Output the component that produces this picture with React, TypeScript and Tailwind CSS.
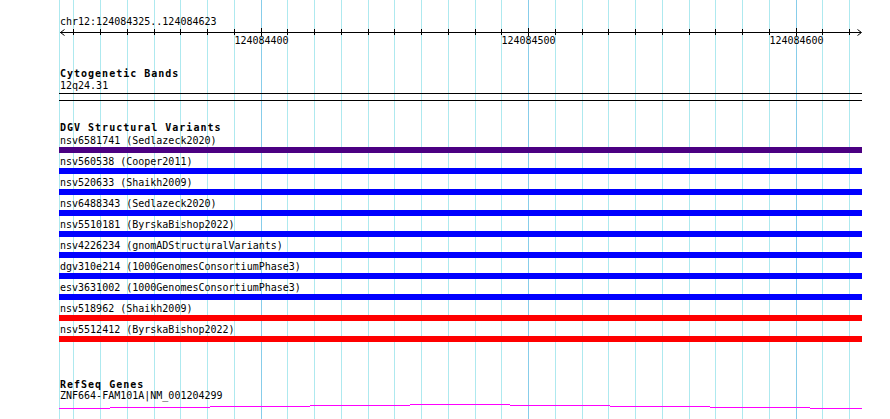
import React from "react";

const MINOR = "#aee9ef";
const MAJOR = "#87cdea";
const gridXs = Array.from({ length: 30 }, (_, k) => Math.round(73.4 + 26.75 * k));
const majorIdx = new Set([7, 17, 27]);
const tickLabels = [
  { k: 7, text: "124084400" },
  { k: 17, text: "124084500" },
  { k: 27, text: "124084600" },
];

const rows: { label: string; bar: string }[] = [
  { label: "nsv6581741 (Sedlazeck2020)", bar: "bg-[#4b0082]" },
  { label: "nsv560538 (Cooper2011)", bar: "bg-[#0000ff]" },
  { label: "nsv520633 (Shaikh2009)", bar: "bg-[#0000ff]" },
  { label: "nsv6488343 (Sedlazeck2020)", bar: "bg-[#0000ff]" },
  { label: "nsv5510181 (ByrskaBishop2022)", bar: "bg-[#0000ff]" },
  { label: "nsv4226234 (gnomADStructuralVariants)", bar: "bg-[#0000ff]" },
  { label: "dgv310e214 (1000GenomesConsortiumPhase3)", bar: "bg-[#0000ff]" },
  { label: "esv3631002 (1000GenomesConsortiumPhase3)", bar: "bg-[#0000ff]" },
  { label: "nsv518962 (Shaikh2009)", bar: "bg-[#ff0000]" },
  { label: "nsv5512412 (ByrskaBishop2022)", bar: "bg-[#ff0000]" },
];

const wiggle: [number, number, number][] = [
  [59, 110, 408],
  [110, 210, 407],
  [210, 310, 406],
  [310, 410, 405],
  [410, 510, 404],
  [510, 610, 405],
  [610, 710, 406],
  [710, 810, 407],
  [810, 862, 408],
];

function GridLayer() {
  return (
    <svg
      className="absolute inset-0 pointer-events-none"
      width={890}
      height={419}
      shapeRendering="crispEdges"
    >
      <rect x={59} y={0} width={1} height={419} fill={MINOR} />
      {gridXs.map((x, k) => (
        <rect key={k} x={x} y={0} width={1} height={419} fill={majorIdx.has(k) ? MAJOR : MINOR} />
      ))}
    </svg>
  );
}

function Ruler() {
  return (
    <svg width={890} height={20} className="block">
      <rect x={60} y={4} width={801} height={1} fill="#000" shapeRendering="crispEdges" />
      {gridXs.map((x, k) => (
        <rect
          key={k}
          x={x}
          y={majorIdx.has(k) ? 0 : 1}
          width={1}
          height={majorIdx.has(k) ? 8 : 6}
          fill="#000"
          shapeRendering="crispEdges"
        />
      ))}
      <polyline points="64.5,1.5 60.5,4.5 64.5,7.5" fill="none" stroke="#000" strokeWidth={1} />
      <polyline points="857.5,1.5 861.5,4.5 857.5,7.5" fill="none" stroke="#000" strokeWidth={1} />
      {tickLabels.map((t) => (
        <text
          key={t.k}
          x={gridXs[t.k] + 0.5}
          y={16}
          textAnchor="middle"
          fontFamily="'DejaVu Sans Mono', monospace"
          fontSize={10}
          fill="#000"
        >
          {t.text}
        </text>
      ))}
    </svg>
  );
}

function Wiggle() {
  return (
    <svg width={890} height={10} className="block" shapeRendering="crispEdges">
      {wiggle.map(([x1, x2, y], i) => (
        <rect key={i} x={x1} y={y - 402} width={x2 - x1} height={1} fill="#ff00ff" />
      ))}
    </svg>
  );
}

const txt = "pl-[60px] h-[13px] text-[10px] leading-[13px] whitespace-nowrap text-black";
const bold = "pl-[60px] text-[10px] leading-[13px] font-bold tracking-[1px] whitespace-nowrap text-black";

export default function App() {
  return (
    <div className="relative w-[890px] h-[419px] overflow-hidden bg-white font-['DejaVu_Sans_Mono',monospace]">
      <GridLayer />
      <div className="relative flex flex-col">
        <div className="h-[15px]" />
        <div className={txt}>chr12:124084325..124084623</div>
        <Ruler />
        <div className="h-[19px]" />

        <div className={`${bold} h-[12px]`}>Cytogenetic Bands</div>
        <div className={txt}>12q24.31</div>
        <div className="h-[1px]" />
        <div className="ml-[59px] w-[803px] h-[8px] border-y border-black" />

        <div className="h-[20px]" />
        <div className={`${bold} h-[13px]`}>DGV Structural Variants</div>
        <div className="flex flex-col gap-[2px]">
          {rows.map((r) => (
            <div key={r.label} className="flex flex-col">
              <div className={txt}>{r.label}</div>
              <div className={`ml-[59px] w-[803px] h-[6px] ${r.bar}`} />
            </div>
          ))}
        </div>

        <div className="h-[36px]" />
        <div className={`${bold} h-[11px]`}>RefSeq Genes</div>
        <div className={txt}>ZNF664-FAM101A|NM_001204299</div>
        <Wiggle />
      </div>
    </div>
  );
}
